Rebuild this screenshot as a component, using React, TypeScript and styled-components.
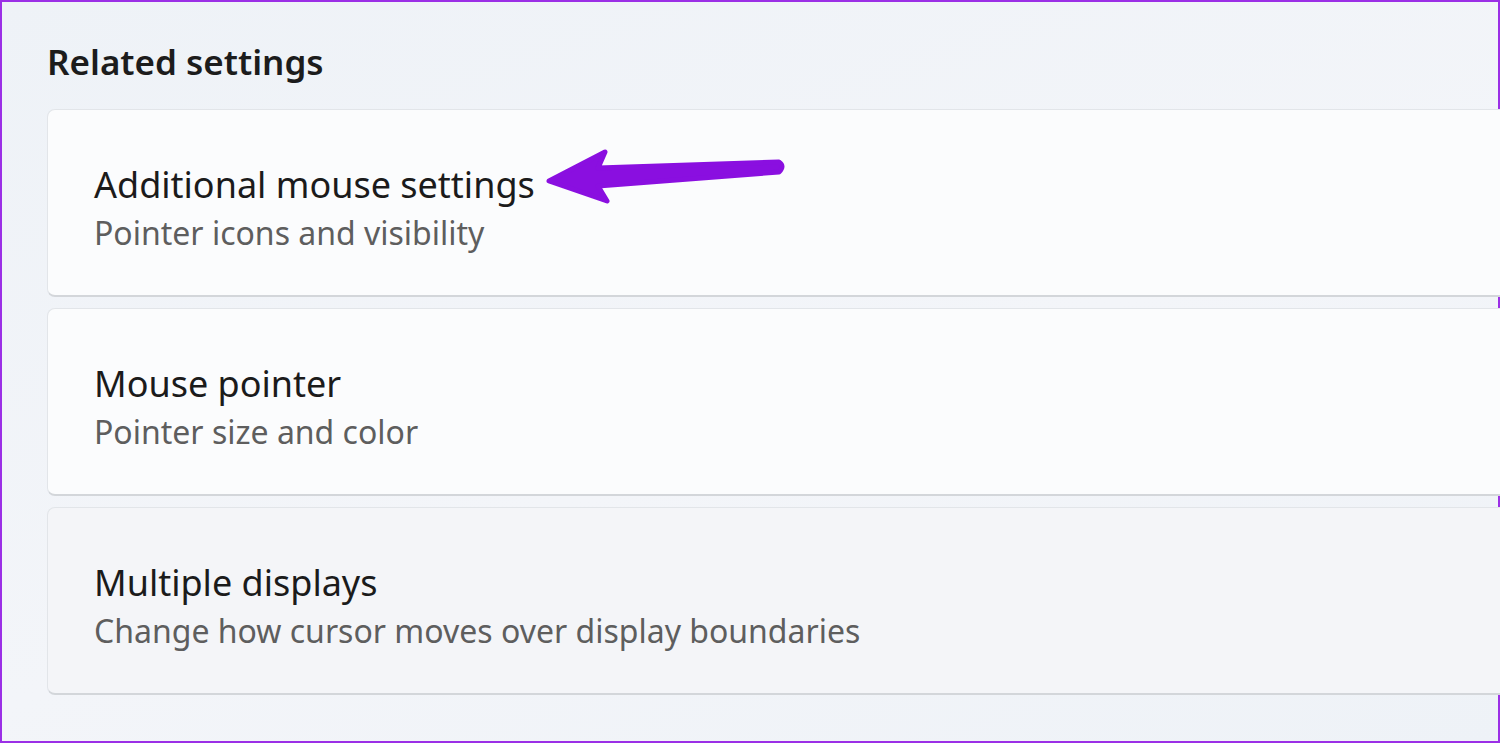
import React from "react";
import styled, { createGlobalStyle } from "styled-components";

const GlobalStyle = createGlobalStyle`
  html, body { margin: 0; padding: 0; overflow: hidden; }
  body { font-family: "Noto Sans", "Open Sans", "DejaVu Sans", sans-serif; }
`

type Item = { title: string; subtitle: string; tone: "white" | "muted" }

const items: Item[] = [
    { title: "Additional mouse settings", subtitle: "Pointer icons and visibility", tone: "white" },
    { title: "Mouse pointer", subtitle: "Pointer size and color", tone: "white" },
    { title: "Multiple displays", subtitle: "Change how cursor moves over display boundaries", tone: "muted" },
]

const App = () => {
    return <>
        <GlobalStyle/>
        <Frame>
            <Heading>Related settings</Heading>
            <List>
                {items.map((it, i) =>
                    <Card key={it.title} tone={it.tone}>
                        <Title>{it.title}</Title>
                        <Subtitle>{it.subtitle}</Subtitle>
                        {i === 0 && <Arrow/>}
                    </Card>
                )}
            </List>
        </Frame>
    </>
}
export default App

// purple annotation arrow drawn over the first card
const Arrow = () =>
    <ArrowSvg width="250" height="70" viewBox="540 145 250 70">
        <path
            d="M549 183 L605 154 L598 170 L779 164 Q785 168 779 174 L598 188 L607 203 Z"
            fill="#8a0fe0" stroke="#8a0fe0" strokeWidth="5" strokeLinejoin="round"
        />
    </ArrowSvg>


const Frame = styled.div`
  box-sizing: border-box;
  width: 1500px; height: 743px;
  border: 2px solid #9b2fe6;
  background: linear-gradient(160deg, #eef2f7 0%, #f3f5f9 55%, #eef2f7 100%);
  padding: 38px 0 0 45px;
  display: flex; flex-direction: column;
`
const Heading = styled.div`
  font-size: 35px; font-weight: 600;
  color: #1c1c1c;
  line-height: 44px;
  margin-bottom: 25px;
`
const List = styled.div`
  display: flex; flex-direction: column;
  gap: 11px;
  margin-right: -30px;
`
const Card = styled.div<{ tone: "white" | "muted" }>`
  position: relative;
  box-sizing: border-box;
  height: 188px;
  padding: 53px 0 0 46px;
  background: ${p => p.tone === "white" ? "#fbfcfd" : "#f4f5f8"};
  border: 1px solid #e2e5e9;
  border-bottom: 2px solid #d3d6da;
  border-radius: 8px;
  display: flex; flex-direction: column;
`
const Title = styled.div`
  font-size: 36px; font-weight: 400;
  color: #1b1b1b;
  line-height: 44px;
`
const Subtitle = styled.div`
  margin-top: 6px;
  font-size: 32px; font-weight: 400;
  color: #5e5e5e;
  line-height: 40px;
`
const ArrowSvg = styled.svg`
  position: absolute;
  left: 492px; top: 33px;
`
